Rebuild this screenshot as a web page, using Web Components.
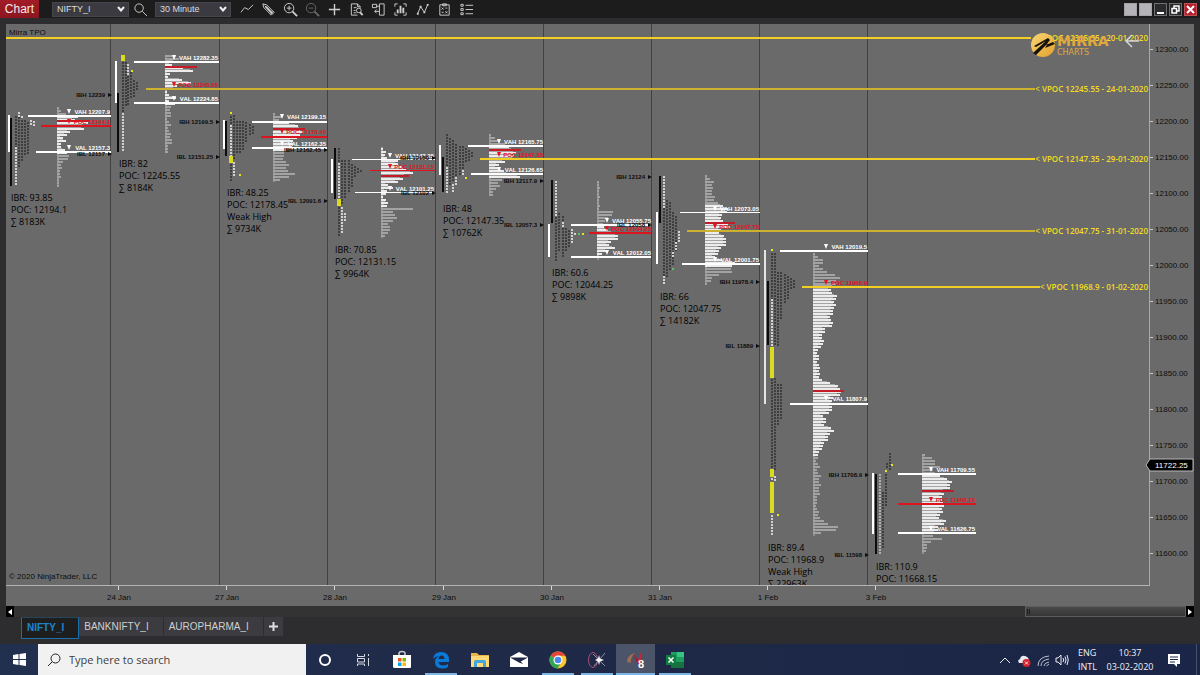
<!DOCTYPE html>
<html lang="en">
<head>
<meta charset="utf-8">
<title>Chart - NIFTY_I</title>
<style>
  html, body { margin: 0; background: #2d2d30; }
  body { font-family: "Liberation Sans", Arial, sans-serif; }
</style>
</head>
<body>
<trading-desktop></trading-desktop>

<template id="t-desktop">
  <style>
    :host { display: flex; flex-direction: column; min-height: 100vh; background: #2d2d30; }
    main { flex: 1; padding: 6px 6px 0; }
  </style>
  <chart-toolbar></chart-toolbar>
  <main>
    <tpo-chart></tpo-chart>
    <scroll-strip></scroll-strip>
    <sheet-tabs></sheet-tabs>
  </main>
  <task-bar></task-bar>
</template>

<template id="t-toolbar">
  <style>
    :host { display: flex; align-items: center; height: 18px; background: #1c1c1d; color: #e6e6e6; }
    h1 { margin: 0 13px 0 0; width: 39px; height: 18px; font: 12px/18px "Liberation Sans", Arial, sans-serif;
         text-align: center; background: linear-gradient(#a31c26, #8b1720); color: #f4eaea; }
    .tools { display: flex; margin-left: 4px; }
    .spacer { flex: 1; }
    .win { display: flex; gap: 2px; margin-right: 3px; }
    .win button { width: 13px; height: 13px; padding: 0; border: 1px solid #6f6f72; background: #2a2a2c; display: grid; place-items: center; }
    .win button.plain { background: #b5b2b8; border-color: #a4a1a8; }
    .win button.close { background: #b3202c; border-color: #c05058; }
    .win svg { width: 11px; height: 11px; display: block; fill: none; stroke: #fff; stroke-width: 2; }
  </style>
  <h1>Chart</h1>
  <drop-down label="Instrument" value="NIFTY_I" style="--w:77px"></drop-down>
  <tool-button label="Find instrument"><svg viewBox="0 0 16 16"><circle cx="6.500" cy="6.500" r="4.500"/><path d="M10 10L15 15"/></svg></tool-button>
  <drop-down label="Interval" value="30 Minute" style="--w:76px;margin-left:4px"></drop-down>
  <div class="tools">
    <tool-button label="Trend line"><svg viewBox="0 0 16 16"><path d="M2 11L6 6L10 8L15 3"/></svg></tool-button>
    <tool-button label="Drawing tools"><svg viewBox="0 0 16 16"><path d="M2 2L6 3L14 11L11 14L3 6Z M4 4L12 12M10 13L13 10" /><path d="M5 5L12 12" stroke-width="2"/></svg></tool-button>
    <tool-button label="Zoom in"><svg viewBox="0 0 16 16"><circle cx="6.500" cy="6.500" r="5"/><path d="M4 6.500H9M6.500 4V9"/><path d="M10 10L15 15" stroke-width="2"/></svg></tool-button>
    <tool-button label="Zoom out" style="color:#6a6a6a"><svg viewBox="0 0 16 16"><circle cx="6.500" cy="6.500" r="5"/><path d="M4 6.500H9"/><path d="M10 10L15 15" stroke-width="2"/></svg></tool-button>
    <tool-button label="Crosshair"><svg viewBox="0 0 16 16"><path d="M8 2V14M2 8H14" stroke-width="1.500"/></svg></tool-button>
    <tool-button label="Data box"><svg viewBox="0 0 16 16"><path d="M9 14H2.500V2H9L12 5V6M9 2V5H12M5 6H8M5 9H7M5 11.500H8"/><circle cx="10.500" cy="9" r="2.500"/><path d="M12 11L14.500 14" stroke-width="2"/></svg></tool-button>
    <tool-button label="Chart trader"><svg viewBox="0 0 16 16"><path d="M9 2H14V14H9ZM1.500 2.500H6V6H1.500ZM6 4.500H9M9 10H4M6 8L4 10L6 12"/></svg></tool-button>
    <tool-button label="Data series"><svg viewBox="0 0 16 16"><path d="M2 5V2H5M11 2H14V5M14 11V14H11M5 14H2V11"/><path d="M5 12V8M8 12V4M11 12V6" stroke-width="2"/></svg></tool-button>
    <tool-button label="Indicators"><svg viewBox="0 0 16 16"><path d="M3 12L6 5L10 11L13.500 3"/><path d="M2 12.500H4M5 5H7M9 11H11M12.500 3H14.500" stroke-width="2"/></svg></tool-button>
    <tool-button label="Strategies"><svg viewBox="0 0 16 16"><path d="M3 3H13V14H3ZM6 2H10V4H6ZM5 6L7 8M7 6L5 8M9 10L11 12M11 10L9 12M9 6.500H11M5 11H7"/></svg></tool-button>
    <tool-button label="Properties"><svg viewBox="0 0 16 16"><path d="M2 2.500H4.500V4.500H2ZM2 7H4.500V9H2ZM2 11.500H4.500V13.500H2ZM7 3.500H15M7 8H15M7 12.500H15"/></svg></tool-button>
  </div>
  <div class="spacer"></div>
  <div class="win">
    <button class="plain" aria-label="Link instrument"></button>
    <button class="plain" aria-label="Link interval"></button>
    <button aria-label="Minimize"><svg viewBox="0 0 11 11"><path d="M2 9H9"/></svg></button>
    <button aria-label="Restore"><svg viewBox="0 0 11 11" style="stroke-width:1.500"><path d="M4 4V2H9V7H7M2 4.500H6.500V9H2Z"/></svg></button>
    <button class="close" aria-label="Close"><svg viewBox="0 0 11 11"><path d="M2 2L9 9M9 2L2 9"/></svg></button>
  </div>
</template>

<template id="t-tool">
  <style>
    :host { display: block; color: #cfcfcf; }
    button { width: 22px; height: 18px; padding: 0; border: 0; background: none; color: inherit; display: grid; place-items: center; }
    ::slotted(svg) { width: 15px; height: 15px; fill: none; stroke: currentColor; }
  </style>
  <button><slot></slot></button>
</template>

<template id="t-drop">
  <style>
    :host { display: block; }
    label { display: grid; width: var(--w); align-items: center; }
    select { grid-area: 1/1; appearance: none; width: 100%; height: 15px; margin: 0; padding: 0 16px 0 4px; border: 1px solid #45454c;
             border-radius: 0; background: #3a3a40; color: #dcdcdc; font: 9px/13px "Liberation Sans", Arial, sans-serif; }
    svg { grid-area: 1/1; justify-self: end; margin-right: 4px; width: 8px; height: 6px; fill: none; stroke: #f0f0f0; stroke-width: 2; pointer-events: none; }
  </style>
  <label><select></select><svg viewBox="0 0 8 6"><path d="M1 1L4 4.500L7 1"/></svg></label>
</template>

<template id="t-chart">
  <style>
    :host { display: block; background: #6a6a6a; }
    svg { display: block; width: 100%; height: auto; }
    text { font-family: "Liberation Sans", Arial, sans-serif; font-size: 8px; fill: #0c0c0c; }
    .mark { font-size: 6px; font-weight: 700; text-anchor: end; }
    .white { fill: #fff; } .red { fill: #e8101c; } .black { fill: #0c0c0c; }
    .info { font-family: "Open Sans", "Noto Sans", sans-serif; font-size: 9px; font-weight: 500; fill: #000; }
    .vpoc { font-family: "Open Sans", "Noto Sans", sans-serif; font-weight: 600; fill: #f3dc22; text-anchor: end; }
    .date { text-anchor: middle; }
    .last { fill: #fff; }
    .brand { font-family: "DejaVu Sans", sans-serif; font-size: 14px; font-weight: 700; fill: #e3a83c; }
    .sub { font-family: "DejaVu Sans", sans-serif; font-size: 8px; fill: #e3a83c; }
  </style>
  <svg viewBox="6 24 1188 582" role="img" aria-label="Mirra TPO chart">
    <defs>
      <clipPath id="plot"><rect x="6" y="24" width="1143" height="561"/></clipPath>
      <linearGradient id="gold" x1="0" y1="0" x2="1" y2="1">
        <stop offset="0" stop-color="#f7d774"/><stop offset="1" stop-color="#e2a02c"/>
      </linearGradient>
    </defs>
    <g id="grid"></g>
    <g id="sessions" clip-path="url(#plot)"></g>
    <g id="levels"></g>
    <g id="axes"></g>
    <circle cx="1043" cy="45" r="12" fill="url(#gold)"/>
    <path d="M1033 53L1046 41L1036 47L1034 46L1048 38L1050 40L1046 45L1053 42L1055 44L1045 48L1048 43L1036 55Z" fill="#15120c"/>
    <text class="brand" x="1057" y="46">MIRRA</text>
    <text class="sub" x="1057" y="55">CHARTS</text>
    <path d="M1139 41H1126M1132 35L1126 41L1132 47" fill="none" stroke="#d4d4d4" stroke-width="1.500"/>
  </svg>
</template>

<template id="t-scroll">
  <style>
    :host { display: flex; height: 11px; background: #333334; }
    button { width: 8px; height: 11px; padding: 0; border: 0; background: #000; display: grid; place-items: center; }
    svg { width: 4px; height: 6px; fill: #fff; display: block; }
    .track { flex: 1; display: flex; justify-content: flex-end; }
    .thumb { width: 161px; box-sizing: border-box; border: 1px solid #5c5c5c; background: linear-gradient(#4a4a4a, #353535); display: flex; gap: 1px; align-items: center; padding-left: 1px; }
    .thumb i { width: 1px; height: 5px; background: #1d1d1d; }
  </style>
  <button aria-label="Scroll left"><svg viewBox="0 0 4 6"><path d="M4 0V6L0 3Z"/></svg></button>
  <div class="track"><div class="thumb"><i></i><i></i></div></div>
  <button aria-label="Scroll right"><svg viewBox="0 0 4 6"><path d="M0 0V6L4 3Z"/></svg></button>
</template>

<template id="t-tabs">
  <style>
    :host { display: flex; align-items: flex-start; height: 27px; padding-left: 15px; }
    button { height: 19px; margin: 0; padding: 0 14px 0 5px; border: 0; border-right: 1px solid #2d2d30; background: #3b3b40;
             color: #cfcfcf; font: 10px/19px "Liberation Sans", Arial, sans-serif; text-align: left; }
    button[aria-selected=true] { height: 22px; line-height: 20px; padding: 0 14px 0 5px; border: 1px solid #1b6fa8; border-top-color: #24455c; background: #1e1e1f; color: #1d86cf; font-weight: 700; }
    .add { padding: 0; width: 20px; display: grid; place-items: center; }
    svg { width: 9px; height: 9px; stroke: #e0e0e0; stroke-width: 2; display: block; }
  </style>
  <button role="tab" aria-selected="true">NIFTY_I</button>
  <button role="tab">BANKNIFTY_I</button>
  <button role="tab">AUROPHARMA_I</button>
  <button class="add" aria-label="New tab"><svg viewBox="0 0 9 9"><path d="M4.500 0V9M0 4.500H9"/></svg></button>
</template>

<template id="t-app">
  <style>
    :host { display: block; }
    button { width: 39px; height: 31px; padding: 0; border: 0; background: none; display: grid; place-items: center; position: relative; }
    :host([narrow]) button { width: 38px; }
    :host([open]) button::after { content: ""; position: absolute; left: 4px; right: 3px; bottom: 0; height: 2px; background: #7db4e6; }
    :host([active]) button { background: #4c5469; }
    :host([active]) button::after { left: 0; right: 0; }
    ::slotted(svg) { width: 20px; height: 20px; }
  </style>
  <button><slot></slot></button>
</template>

<template id="t-taskbar">
  <style>
    :host { display: flex; align-items: center; height: 31px; background: linear-gradient(90deg, #22304f, #1e2846 55%, #1a2548); color: #f0f0f4;
            font-family: "Open Sans", "Noto Sans", sans-serif; }
    .start { width: 38px; height: 31px; padding: 0; border: 0; background: none; display: grid; place-items: center; }
    .start svg { width: 13px; height: 13px; fill: #fff; }
    label { display: flex; align-items: center; gap: 8px; box-sizing: border-box; width: 268px; height: 31px; padding-left: 9px; background: #f1f1f1; }
    label svg { width: 14px; height: 14px; fill: none; stroke: #222; flex: none; }
    input { flex: 1; min-width: 0; border: 0; padding: 0; background: none; font: 11px/20px "Open Sans", "Noto Sans", sans-serif; color: #333; outline: 0; }
    input::placeholder { color: #404040; opacity: 1; }
    nav { display: flex; flex: 1; }
    .tray { display: flex; align-items: center; gap: 5px; }
    .tray svg { width: 14px; height: 14px; fill: none; stroke: #eee; display: block; }
    .tray div { font-size: 9px; line-height: 14px; text-align: center; }
    .tray .lang { width: 20px; margin: 0 1px 0 4px; text-align: left; }
    .tray .clock { width: 50px; margin-left: 1px; }
    .tray .note { margin: 0 10px 0 7px; padding: 0; border: 0; background: none; }
    .edge { width: 1px; height: 31px; background: #46506a; margin-right: 3px; }
  </style>
  <button class="start" aria-label="Start"><svg viewBox="0 0 13 13"><path d="M0 2L5.500 1V6H0ZM6.500 1L13 0V6H6.500ZM0 7H5.500V12L0 11ZM6.500 7H13V13L6.500 12Z"/></svg></button>
  <label aria-label="Search"><svg viewBox="0 0 14 14"><circle cx="8.500" cy="5.500" r="4.500"/><path d="M5 9L1 13"/></svg><input type="text" placeholder="Type here to search"></label>
  <nav>
    <task-app narrow label="Cortana"><svg viewBox="0 0 20 20"><circle cx="10" cy="10" r="5" fill="none" stroke="#fff" stroke-width="2"/></svg></task-app>
    <task-app narrow label="Task view"><svg viewBox="0 0 20 20" fill="none" stroke="#d5d9e2"><path d="M4.500 4V6.500H11.500V4M4.500 8.500H11.500V12H4.500ZM4.500 16V14H11.500V16M15.500 4V6M15.500 8V16"/></svg></task-app>
    <task-app label="Store"><svg viewBox="0 0 20 20"><path d="M7 6V3.500Q7 1.500 10 1.500T13 3.500V6" fill="none" stroke="#ccc" stroke-width="1.500"/><path d="M1 5H19V17Q19 18 18 18H3Q1 18 1 17Z" fill="#fff"/><path d="M6 8H9.500V11.500H6Z" fill="#f25022"/><path d="M10.500 8H14V11.500H10.500Z" fill="#7fba00"/><path d="M6 12.500H9.500V16H6Z" fill="#00a4ef"/><path d="M10.500 12.500H14V16H10.500Z" fill="#ffb900"/></svg></task-app>
    <task-app open label="Edge"><svg viewBox="0 0 20 20"><path d="M2 9Q3 2 10 2Q18 2 18 10V12H7.500Q8 15.500 12 15.500Q15 15.500 17 14V17Q14.500 18.500 11 18.500Q4 18 4 12Q4 8 8 6Q4 6.500 2 9ZM7.500 9H13.500Q13.500 5.500 10.500 5.500Q8 5.500 7.500 9Z" fill="#0a7ad8" fill-rule="evenodd"/></svg></task-app>
    <task-app label="File Explorer"><svg viewBox="0 0 20 20"><path d="M1 3H7L9 5H19V17H1Z" fill="#e9b44a"/><path d="M1 6H19V17H1Z" fill="#ffd976"/><path d="M4 17V12Q4 10 6 10H14Q16 10 16 12V17H13V13H7V17Z" fill="#42a5dc"/></svg></task-app>
    <task-app label="Mail"><svg viewBox="0 0 20 20"><path d="M1 7L10 2L19 7V17H1Z" fill="#fff"/><path d="M1 7.500H19L10 12.500Z" fill="#1e2846"/><path d="M10 9.500L14 14L10 12.500Z" fill="#1e2846"/></svg></task-app>
    <task-app open label="Chrome"><svg viewBox="0 0 20 20"><circle cx="10" cy="10" r="8.500" fill="#fbc52d"/><path d="M10 10L2.600 5.700A8.500 8.500 0 0 1 17.400 5.700H10Z" fill="#e2473a"/><path d="M10 10L2.600 5.700A8.500 8.500 0 0 0 9.500 18.500L13.500 12Z" fill="#35a354"/><circle cx="10" cy="10" r="4.500" fill="#fff"/><circle cx="10" cy="10" r="3.300" fill="#4a86ec"/></svg></task-app>
    <task-app open label="Data feed"><svg viewBox="0 0 20 20"><ellipse cx="6" cy="10" rx="4.500" ry="7.500" fill="none" stroke="#a9506d"/><path d="M6 4L18 16M18 3L7 16" stroke="#8a90a0"/><path d="M12 5L13 8.500L17 10L13 11.500L12 15L11 11.500L8 10L11 8.500Z" fill="#f4f4f8"/></svg></task-app>
    <task-app open active label="NinjaTrader"><svg viewBox="0 0 20 20"><path d="M1 12Q1 5 9 3Q4 8 5 13Z" fill="#a36b4e"/><path d="M7 4L15 12L12 15Z" fill="#a3202e"/><path d="M11 13L15 2L15 12Z" fill="#c22a36"/><text x="12" y="18" font-size="11" font-weight="700" fill="#fff" font-family="Liberation Sans, sans-serif">8</text></svg></task-app>
    <task-app open label="Excel"><svg viewBox="0 0 20 20"><path d="M6 2H19V18H6Z" fill="#1f9d5f"/><path d="M12 2H19V7H12Z" fill="#35c481"/><path d="M6 12H19V18H6Z" fill="#16733f"/><path d="M1 5H11V15H1Z" fill="#107c41"/><path d="M3.500 7.500L8.500 12.500M8.500 7.500L3.500 12.500" stroke="#fff" stroke-width="1.500"/></svg></task-app>
  </nav>
  <div class="tray">
    <svg viewBox="0 0 14 14"><path d="M2 10L7 5L12 10"/></svg>
    <svg viewBox="0 0 14 14"><path d="M2 10Q0 7 3 6Q4 2 8 3Q12 4 12 8V10Z" fill="#e8e8ee" stroke="none"/><circle cx="9.500" cy="10" r="4" fill="#d5202c" stroke="none"/><path d="M8 8.500L11 11.500M11 8.500L8 11.500"/></svg>
    <svg viewBox="0 0 14 14" style="stroke:#b8bfcd"><path d="M2 13Q2 4 13 3M5 13Q5 7 13 6M8 13Q8 10 13 9M10.500 13L13 11"/></svg>
    <svg viewBox="0 0 14 14"><path d="M1 5H3L6 2V12L3 9H1ZM8 5Q9.500 7 8 9M10 3.500Q12 7 10 10.500M12 2Q14.500 7 12 12"/></svg>
    <div class="lang">ENG<br>INTL</div>
    <div class="clock">10:37<br>03-02-2020</div>
    <button class="note" aria-label="Notifications"><svg viewBox="0 0 14 14"><path d="M1 1H13V11H10V14L7 11H1Z" fill="#fff" stroke="none"/><path d="M3 4H11M3 6.500H11M3 9H8" stroke="#1a2548"/></svg></button>
    <div class="edge"></div>
  </div>
</template>

<script>
class Base extends HTMLElement {
  constructor(id) {
    super();
    this.attachShadow({ mode: 'open' }).append(document.getElementById(id).content.cloneNode(true));
  }
}
const simple = (tag, id) => customElements.define(tag, class extends Base { constructor() { super(id); } });
const labelled = (tag, id) => customElements.define(tag, class extends Base {
  constructor() { super(id); }
  connectedCallback() { this.shadowRoot.querySelector('button').setAttribute('aria-label', this.getAttribute('label')); }
});

customElements.define('drop-down', class extends Base {
  constructor() { super('t-drop'); }
  connectedCallback() {
    const s = this.shadowRoot.querySelector('select');
    s.setAttribute('aria-label', this.getAttribute('label'));
    s.replaceChildren(new Option(this.getAttribute('value')));
  }
});

/* One entry per trading day.
   info: [x, first baseline, lines]      ib: [label, right edge, centre y]
   bars: opening-range bars [x, y1, y2, colour]
   line: [y, x1, x2, colour, thickness]  tag: [label, right edge, baseline, colour]
   cols: letter columns [x, y1, y2, tone]
   x, hist: left edge and [y, width] knots; va: value area [y1, y2]; hot: red rows [y, width] */
const W = '#fff', K = '#0c0c0c', R = '#dc1420', D = '#3e3e3e', L = '#d2d2d2', Y = '#e6e61e', G = '#5fc060';
const SESSIONS = [
  { info: [11, 201, ['IBR: 93.85', 'POC: 12194.1', '∑ 8183K']],
    ib: [], bars: [[8, 115, 152, W], [10, 118, 186, K]],
    line: [[115, 28, 111, W, 2], [125, 41, 111, R, 2], [151, 36, 111, W, 2]],
    tag: [['VAH 12207.9', 110, 114, 'white'], ['POC 12194.1', 110, 124, 'red'], ['VAL 12157.3', 110, 150, 'white']],
    cols: [[15, 116, 147, D], [15, 147, 186, L], [18, 112, 116, L], [18, 117, 166, D], [21, 116, 118, L], [21, 120, 160, D], [24, 120, 156, D], [27, 122, 155, D], [30, 120, 124, L], [33, 121, 126, L]],
    x: 57, va: [114, 152], hist: [[107,3],[110,4],[113,8],[116,22],[119,18],[122,30],[128,27],[131,12],[134,11],[137,6],[140,8],[143,5],[147,4],[150,8],[153,13],[157,11],[160,9],[163,4],[170,4],[185,1]], hot: [[120, 32]] },
  { info: [119, 167, ['IBR: 82', 'POC: 12245.55', '∑ 8184K']],
    ib: [['IBH 12239', 105, 95], ['IBL 12157', 105, 154]], bars: [[115, 61, 103, W], [117, 93, 152, K]],
    line: [[61, 134, 219, W, 2], [102, 134, 219, W, 2]],
    tag: [['VAH 12282.35', 218, 60, 'white'], ['POC 12245.55', 218, 87, 'red'], ['VAL 12224.85', 218, 101, 'white']],
    cols: [[121, 55, 61, Y], [122, 62, 113, D], [122, 113, 151, L], [125, 62, 106, D], [127, 64, 74, L], [127, 76, 104, D], [131, 70, 71, Y], [130, 72, 98, D], [133, 80, 96, D], [136, 82, 89, D]],
    x: 165, va: [60, 103], hist: [[55,12],[58,14],[61,10],[64,8],[70,27],[73,6],[76,3],[79,16],[82,27],[85,12],[88,10],[91,3],[94,4],[97,10],[100,5],[103,10],[106,5],[112,6],[118,3],[124,5],[128,3],[134,5],[140,7],[145,4],[151,2]], hot: [[66, 32]] },
  { info: [227, 196, ['IBR: 48.25', 'POC: 12178.45', 'Weak High', '∑ 9734K']],
    ib: [['IBH 12199.5', 213, 122], ['IBL 12151.25', 213, 157]], bars: [[223, 120, 149, W], [225, 121, 156, K]],
    line: [[121, 252, 327, W, 2], [136, 261, 327, R, 2], [147, 252, 327, W, 2]],
    tag: [['VAH 12199.15', 326, 119, 'white'], ['POC 12178.45', 326, 134, 'red'], ['VAL 12162.35', 326, 146, 'white']],
    cols: [[230, 112, 115, Y], [230, 116, 125, D], [230, 125, 156, L], [229, 156, 163, Y], [230, 164, 180, D], [233, 115, 160, D], [233, 162, 176, L], [236, 121, 152, D], [239, 121, 152, D], [239, 174, 175, Y], [242, 121, 151, D], [245, 122, 143, D], [249, 124, 136, D], [252, 126, 134, D]],
    x: 273, va: [121, 150], hist: [[113,3],[116,8],[119,5],[122,17],[125,25],[131,31],[134,27],[138,22],[142,20],[146,18],[150,12],[156,9],[160,12],[164,15],[168,14],[171,15],[174,24],[177,14],[180,3]], hot: [[128, 32]] },
  { info: [335, 253, ['IBR: 70.85', 'POC: 12131.15', '∑ 9964K']],
    ib: [['IBH 12162.45', 321, 150], ['IBL 12091.6', 321, 201]], bars: [[331, 159, 193, W], [334, 148, 199, K]],
    line: [[159, 352, 435, W, 1], [170, 370, 435, R, 1], [192, 355, 435, W, 1]],
    tag: [['VAH 12147.25', 434, 158, 'white'], ['POC 12131.15', 434, 169, 'red'], ['VAL 12101.25', 434, 191, 'white']],
    cols: [[338, 148, 163, D], [338, 163, 199, L], [337, 199, 206, Y], [338, 207, 237, D], [341, 160, 205, D], [341, 207, 234, L], [344, 160, 198, D], [344, 213, 220, L], [348, 160, 193, D], [348, 216, 216, Y], [351, 164, 186, D], [354, 166, 178, D], [357, 168, 174, D], [360, 170, 172, D]],
    x: 381, va: [148, 207], hist: [[148,3],[151,5],[154,3],[157,7],[160,17],[163,16],[166,22],[169,25],[172,31],[178,22],[181,16],[184,8],[187,12],[190,5],[193,6],[196,2],[199,4],[202,8],[205,6],[208,31],[211,13],[218,15],[221,12],[224,5],[227,9],[230,10],[233,5],[236,2]], hot: [[175, 28]] },
  { info: [443, 212, ['IBR: 48', 'POC: 12147.35', '∑ 10762K']],
    ib: [['IBH 12150', 429, 158], ['IBL 12102', 429, 193]], bars: [[439, 145, 175, W], [442, 157, 192, K]],
    line: [[145, 468, 543, W, 2], [173, 471, 543, W, 2]],
    tag: [['VAH 12165.75', 543, 144, 'white'], ['POC 12147.35', 543, 157, 'red'], ['VAL 12126.65', 543, 172, 'white']],
    cols: [[446, 134, 167, D], [446, 167, 193, L], [449, 138, 184, D], [452, 140, 182, D], [452, 184, 192, L], [455, 144, 176, D], [455, 177, 184, L], [459, 146, 174, D], [462, 146, 168, D], [462, 170, 176, L], [465, 148, 162, D], [465, 177, 178, Y], [468, 150, 160, D], [471, 152, 156, D]],
    x: 489, va: [144, 177], hist: [[134,2],[137,6],[140,10],[143,17],[146,20],[152,28],[155,25],[158,25],[161,17],[164,10],[167,8],[170,16],[173,20],[176,30],[179,14],[182,9],[185,10],[188,8],[191,4],[194,3]], hot: [[149, 32]] },
  { info: [552, 276, ['IBR: 60.6', 'POC: 12044.25', '∑ 9898K']],
    ib: [['IBH 12117.9', 537, 181], ['IBL 12057.3', 537, 225]], bars: [[551, 180, 223, K], [548, 224, 257, W]],
    line: [[224, 571, 651, W, 2], [232, 589, 651, R, 2], [256, 571, 651, W, 2]],
    tag: [['VAH 12055.75', 651, 223, 'white'], ['POC 12044.25', 651, 231, 'red'], ['VAL 12012.05', 651, 255, 'white']],
    cols: [[555, 181, 217, L], [555, 217, 260, D], [558, 213, 252, D], [562, 216, 258, D], [562, 222, 226, L], [565, 228, 252, D], [568, 230, 248, D], [571, 229, 242, L], [574, 233, 234, L], [578, 233, 234, G], [582, 233, 234, Y]],
    x: 597, va: [225, 258], hist: [[181,2],[206,2],[208,3],[211,16],[214,14],[217,12],[220,8],[223,5],[226,8],[230,12],[234,20],[237,25],[240,14],[243,10],[246,20],[250,10],[254,5],[258,3]], hot: [] },
  { info: [660, 300, ['IBR: 66', 'POC: 12047.75', '∑ 14182K']],
    ib: [['IBH 12124', 645, 177], ['IBL 12058', 645, 225]], bars: [[659, 176, 223, K], [656, 212, 264, W]],
    line: [[212, 680, 760, W, 1], [263, 682, 760, W, 2]],
    tag: [['VAH 12073.05', 759, 211, 'white'], ['POC 12047.75', 759, 229, 'red'], ['VAL 12001.75', 759, 262, 'white']],
    cols: [[663, 176, 208, L], [663, 208, 275, D], [663, 276, 284, L], [666, 200, 276, D], [669, 202, 270, D], [672, 212, 264, D], [672, 252, 258, L], [675, 216, 250, D], [675, 242, 250, L], [678, 231, 242, L], [672, 268, 270, G]],
    x: 705, va: [203, 265], hist: [[175,3],[178,5],[181,8],[187,8],[190,6],[195,10],[200,8],[203,17],[206,18],[209,24],[212,22],[215,14],[218,16],[225,26],[228,20],[231,12],[234,17],[238,22],[243,21],[247,17],[251,13],[255,10],[258,12],[261,28],[264,30],[267,24],[270,30],[273,18],[276,8],[279,5],[283,3]], hot: [[222, 30]] },
  { info: [768, 551, ['IBR: 89.4', 'POC: 11968.9', 'Weak High', '∑ 22963K']],
    ib: [['IBH 11978.4', 753, 282], ['IBL 11889', 753, 346]], bars: [[764, 250, 404, '#e4e4e4'], [767, 281, 345, K]],
    line: [[250, 780, 868, W, 2], [403, 790, 868, W, 2]],
    tag: [['VAH 12019.5', 867, 249, 'white'], ['POC 11968.9', 867, 285, 'red'], ['VAL 11807.9', 867, 401, 'white']],
    cols: [[771, 249, 252, Y], [771, 253, 299, D], [771, 299, 345, L], [770, 347, 378, Y], [771, 379, 468, D], [770, 469, 477, Y], [771, 478, 481, L], [770, 482, 513, Y], [771, 515, 535, L], [774, 253, 346, D], [774, 378, 470, D], [774, 476, 481, L], [777, 272, 346, D], [777, 384, 425, D], [777, 514, 515, Y], [780, 272, 320, D], [780, 384, 418, D], [784, 274, 302, D], [787, 276, 300, D], [790, 278, 290, D], [793, 280, 287, D]],
    x: 813, va: [286, 456], hist: [[253,3],[258,7],[261,12],[265,6],[269,10],[273,20],[277,26],[280,24],[284,22],[287,20],[290,18],[293,20],[297,26],[300,20],[305,23],[310,20],[315,18],[320,18],[325,20],[328,12],[332,10],[338,9],[343,11],[347,7],[350,3],[353,6],[360,5],[366,6],[372,7],[376,5],[380,12],[383,20],[387,28],[393,28],[396,22],[399,18],[402,20],[408,20],[411,16],[415,11],[419,13],[423,10],[427,18],[431,20],[435,15],[440,14],[445,10],[450,7],[455,5],[458,3],[465,6],[472,5],[476,8],[480,5],[485,8],[490,6],[497,5],[503,3],[510,5],[517,7],[522,12],[525,24],[528,27],[531,12],[534,3]], hot: [[390, 31]] },
  { info: [876, 570, ['IBR: 110.9', 'POC: 11668.15']],
    ib: [['IBH 11708.9', 862, 475], ['IBL 11598', 862, 555]], bars: [[872, 473, 534, W], [875, 474, 554, K]],
    line: [[473, 898, 976, W, 2], [503, 898, 976, R, 2], [532, 898, 976, W, 2]],
    tag: [['VAH 11709.55', 975, 472, 'white'], ['POC 11668.15', 975, 502, 'red'], ['VAL 11626.75', 975, 531, 'white']],
    cols: [[879, 474, 554, '#aeaeae'], [882, 492, 548, D], [886, 463, 468, D], [885, 470, 473, Y], [885, 474, 505, D], [889, 453, 470, D], [891, 464, 465, Y]],
    x: 922, va: [474, 534], hist: [[454,4],[457,10],[460,12],[463,14],[466,18],[469,10],[472,14],[475,18],[478,24],[481,31],[484,28],[487,27],[493,22],[497,18],[500,22],[507,20],[510,22],[513,18],[516,15],[519,24],[522,23],[525,17],[529,16],[532,14],[535,12],[538,20],[541,8],[544,6],[548,4],[552,2]], hot: [[490, 32]] },
];
const rect = (x, y, w, h, c) => `<rect x="${x}" y="${y}" width="${w}" height="${h}" fill="${c}"/>`;

customElements.define('tpo-chart', class extends Base {
  constructor() { super('t-chart'); }
  connectedCallback() {
    const at = id => this.shadowRoot.getElementById(id);
    at('grid').innerHTML = [110, 219, 327, 435, 543, 651, 759, 867].map(x => rect(x, 24, 1, 561, '#414141')).join('');
    at('sessions').innerHTML = SESSIONS.map(s => this.session(s)).join('');
    at('levels').innerHTML = [
      [37, 6, 1031, 2, 'VPOC 12315.35 - 20-01-2020', 41, ''], [88, 146, 1035, 2, 'VPOC 12245.55 - 24-01-2020', 92, '&lt; '],
      [158, 480, 1035, 2, 'VPOC 12147.35 - 29-01-2020', 162, '&lt; '], [230, 687, 1035, 2, 'VPOC 12047.75 - 31-01-2020', 234, '&lt; '],
      [286, 802, 1040, 2, 'VPOC 11968.9 - 01-02-2020', 290, '&lt; '],
    ].map(([y, x1, x2, h, t, b, p]) => rect(x1, y, x2 - x1, h, b === 92 || b === 234 ? '#cdb02e' : '#f2cf22') + `<text class="vpoc" x="1148" y="${b}">${p}${t}</text>`).join('');
    let axes = rect(1149, 24, 1, 562, '#a8a8a8') + rect(6, 585, 1144, 1, '#b4b4b4');
    for (let i = 0; i < 15; i++) {
      const y = 49 + i * 36;
      axes += rect(1150, y, 3, 1, '#c8c8c8') + `<text x="1155" y="${y + 3}">${12300 - i * 50}.00</text>`;
    }
    [['24 Jan', 118], ['27 Jan', 226], ['28 Jan', 334], ['29 Jan', 443], ['30 Jan', 551], ['31 Jan', 659], ['1 Feb', 767], ['3 Feb', 875]]
      .forEach(([t, x]) => { axes += rect(x, 586, 1, 4, '#d8d8d8') + `<text class="date" x="${x + 1}" y="600">${t}</text>`; });
    axes += `<path d="M1146 465L1150 459H1193V471H1150Z" fill="#000" stroke="#b8b8b8" stroke-width="1"/><text class="last" x="1155" y="468">11722.25</text>`
      + `<text x="9" y="35">Mirra TPO</text><text x="9" y="579">© 2020 NinjaTrader, LLC</text>`;
    at('axes').innerHTML = axes;
  }
  session(s) {
    let o = '';
    const k = s.hist, end = k[k.length - 1][0];
    o += rect(s.x, k[0][0], 2, end - k[0][0] + 2, '#8f8f8f');
    for (let y = k[0][0], n = 0, i = 0; y <= end; y += 3, n++) {
      while (i < k.length - 2 && k[i + 1][0] < y) i++;
      const [ya, wa] = k[i], [yb, wb] = k[i + 1];
      const w = Math.max(2, Math.round(wa + (wb - wa) * (y - ya) / (yb - ya)) + (n * 7 % 3) - 1);
      const inside = y >= s.va[0] && y <= s.va[1];
      if (inside) o += rect(s.x, y - 1, Math.max(2, w - 3), 3, '#a4a4a4');
      o += rect(s.x, y, w, 2, inside ? '#ececec' : '#a3a3a3');
    }
    s.hot.forEach(([y, w]) => { o += rect(s.x, y, w, 2, '#c41c26'); });
    s.cols.forEach(([x, y1, y2, c]) => {
      if (c === Y && y2 - y1 > 4) o += rect(x, y1, 4, y2 - y1, '#dada20');
      else for (let y = y1; y < y2; y += 3) o += rect(x, y, 2, 2, c);
    });
    s.bars.forEach(([x, a, b, c]) => { o += rect(x, a, 2, b - a, c); });
    s.line.forEach(([y, a, b, c, h]) => { o += rect(a, y, b - a, h, c); });
    s.tag.forEach(([t, x, y, c]) => {
      const a = x - (t.length > 11 ? 46 : 43);
      o += `<path class="${c}" d="M${a} ${y - 5}h4l-2 5z"/><text class="mark ${c}" x="${x}" y="${y}">${t}</text>`;
    });
    s.ib.forEach(([t, x, y]) => {
      o += `<text class="mark black" x="${x}" y="${y + 2}">${t}</text><path class="black" d="M${x + 3} ${y - 2}v4l4 -2z"/>`;
    });
    const [x, y, lines] = s.info;
    lines.forEach((t, i) => { o += `<text class="info" x="${x}" y="${y + i * 12}">${t}</text>`; });
    return o;
  }
});
labelled('tool-button', 't-tool');
labelled('task-app', 't-app');
simple('chart-toolbar', 't-toolbar');
simple('scroll-strip', 't-scroll');
simple('sheet-tabs', 't-tabs');
simple('task-bar', 't-taskbar');
simple('trading-desktop', 't-desktop');
</script>
</body>
</html>
